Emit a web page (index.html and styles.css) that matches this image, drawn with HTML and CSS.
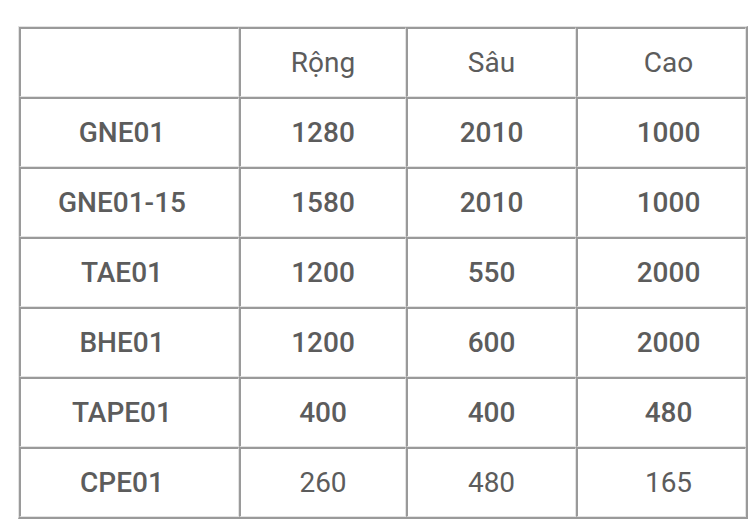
FILE: index.html
```html
<!DOCTYPE html>
<html lang="vi">
<head>
<meta charset="utf-8">
<title>Kích thước</title>
<link rel="stylesheet" href="styles.css">
</head>
<body>
<div class="wrap">
<table class="spec">
  <colgroup>
    <col class="c1"><col class="c2"><col class="c3"><col class="c4">
  </colgroup>
  <thead>
    <tr><th class="name"></th><th>Rộng</th><th>Sâu</th><th class="last">Cao</th></tr>
  </thead>
  <tbody>
    <tr class="bold"><td class="name">GNE01</td><td>1280</td><td>2010</td><td class="last">1000</td></tr>
    <tr class="bold"><td class="name">GNE01-15</td><td>1580</td><td>2010</td><td class="last">1000</td></tr>
    <tr class="bold"><td class="name">TAE01</td><td>1200</td><td>550</td><td class="last">2000</td></tr>
    <tr class="bold"><td class="name">BHE01</td><td>1200</td><td>600</td><td class="last">2000</td></tr>
    <tr class="bold"><td class="name">TAPE01</td><td>400</td><td>400</td><td class="last">480</td></tr>
    <tr><td class="name bold">CPE01</td><td>260</td><td>480</td><td class="last">165</td></tr>
  </tbody>
</table>
</div>
</body>
</html>
```
FILE: styles.css
```css
html, body {
  margin: 0;
  padding: 0;
  background: #fff;
}
.wrap {
  padding: 26px 0 0 18px;
}
.spec {
  border-collapse: separate;
  border-spacing: 0;
  table-layout: fixed;
  width: 729px;
  border-style: solid;
  border-width: 1px 2px 2px 1px;
  border-color: #e3e3e3 #9a9a9a #9a9a9a #e3e3e3;
  font-family: Roboto, "Liberation Sans", sans-serif;
  font-size: 28px;
  color: #5c5c5c;
}
.c1 { width: 220px; }
.c2 { width: 167px; }
.c3 { width: 170px; }
.c4 { width: 170px; }
.spec th,
.spec td {
  box-sizing: border-box;
  height: 70px;
  padding: 0;
  text-align: center;
  vertical-align: middle;
  border-style: solid;
  border-width: 2px 1px 1px 2px;
  border-color: #9a9a9a #e3e3e3 #e3e3e3 #9a9a9a;
  font-weight: 400;
}
.spec tr.bold td,
.spec td.bold {
  font-weight: 500;
}
.spec .name {
  padding-right: 15px;
}
.spec .last {
  padding-left: 14px;
}
```
